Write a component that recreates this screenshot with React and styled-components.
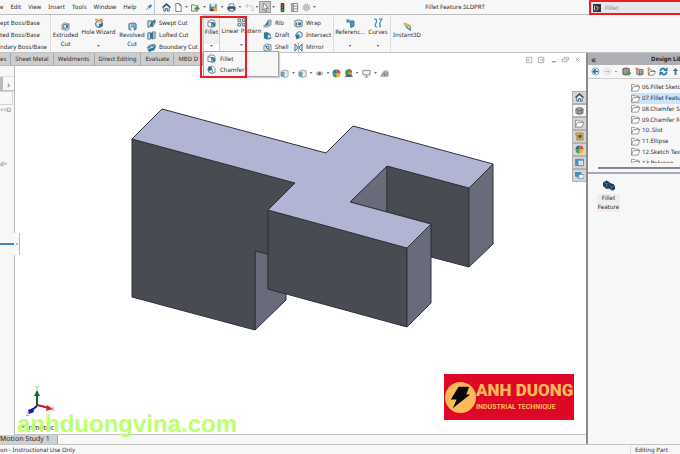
import React from 'react';
import styled, { createGlobalStyle } from 'styled-components';

const GlobalStyle = createGlobalStyle`
  * {
    box-sizing: border-box;
  }
  body {
    margin: 0;
    background: #fff;
    font-family: "Noto Sans", "Open Sans", sans-serif;
    font-size: 6px;
    line-height: 10px;
    color: #2c2c2c;
    text-rendering: geometricPrecision;
  }
  button, input {
    font: inherit;
    color: inherit;
    text-rendering: inherit;
    padding: 0;
    border: 0;
    background: none;
  }
  svg {
    flex: none;
  }
  ul {
    list-style: none;
    margin: 0;
    padding: 0;
  }
`;

const Page = styled.div`
  display: flex;
  flex-direction: column;
  height: 100vh;
  overflow: hidden;
`;

const MenuBar = styled.header`
  display: flex;
  flex: none;
  height: 15px;
  background: #f7f7f7;
  border-bottom: 1px solid #bdbdbd;
`;

const Menus = styled.nav`
  display: flex;
  align-items: center;
  gap: 7px;
  width: 155px;
  border-right: 1px solid #c4c4c4;
  white-space: nowrap;

  button:last-child {
    margin-left: auto;
  }
`;

const TextButton = styled.button`
  white-space: nowrap;
`;

const QuickBar = styled.div`
  display: flex;
  align-items: center;
  padding-left: 5px;
  width: 166px;
`;

const IconButton = styled.button`
  display: flex;
  flex: none;
  align-items: center;
  justify-content: center;
  width: ${(p) => p.$width || 12}px;
  height: 12px;
  background: ${(p) => (p.$pressed ? '#c9c9c9' : 'none')};
  border: ${(p) => (p.$pressed ? '1px solid #9a9a9a' : '0')};
`;

const Arrow = styled.span`
  display: block;
  width: 3px;
  height: 2px;
  background: #777;
  clip-path: polygon(0 0, 100% 0, 50% 100%);
`;

const FileName = styled.div`
  flex: 1;
  text-align: center;
  line-height: 15px;
`;

const SearchBox = styled.label`
  display: flex;
  align-items: center;
  gap: 4px;
  width: 91px;
  height: 15px;
  padding-left: 2px;
  border: 2px solid #ec1c24;
  border-right: 0;
  background: #e8e8ec;

  input {
    flex: 1;
    min-width: 0;
    color: #888;
    outline: 0;
  }
`;

const Ribbon = styled.div`
  display: flex;
  flex: none;
  height: 38px;
  background: #f7f7f7;
  border-bottom: 1px solid #c2c2c2;
  white-space: nowrap;
`;

const Group = styled.div`
  display: flex;
  height: 37px;
  border-right: 1px solid #dcdcdc;
`;

const Stack = styled.div`
  display: grid;
  grid-template-rows: repeat(3, 12px);
  width: ${(p) => p.$width}px;
  padding-top: 2px;
`;

const SmallTool = styled.button`
  display: flex;
  align-items: center;
  gap: 3px;
  line-height: 12px;
`;

const BigTool = styled.button`
  display: flex;
  flex-direction: column;
  align-items: center;
  width: ${(p) => p.$width}px;
  height: 37px;
  padding-top: ${(p) => p.$top || 3}px;
  line-height: 9px;
  background: ${(p) => (p.$open ? 'linear-gradient(#f0f0f0 28px, #fff 28px)' : 'none')};
  border: ${(p) => (p.$open ? '1px solid #cfcfcf' : '0')};

  ${Arrow} {
    margin-top: 8px;
  }
`;

const MenuAnchor = styled.div`
  position: relative;
`;

const DropMenu = styled.div`
  position: absolute;
  z-index: 2;
  top: 36px;
  left: 0;
  width: 76px;
  padding: 1px 3px;
  background: #f7f7f7;
  border: 1px solid #a8a8a8;
  box-shadow: 1px 1px 1px #ccc;

  button {
    display: flex;
    align-items: center;
    gap: 4px;
    width: 100%;
    height: 11px;
  }
`;

const RedFrame = styled.div`
  position: absolute;
  z-index: 3;
  top: 1px;
  left: -3px;
  width: 47px;
  height: 62px;
  border: 2px solid #ec1c24;
  pointer-events: none;
`;

const Work = styled.div`
  display: flex;
  flex: 1;
  min-height: 0;
`;

const Documents = styled.div`
  display: flex;
  flex: 1;
  flex-direction: column;
  min-width: 0;
`;

const TabRow = styled.div`
  display: flex;
  flex: none;
  height: 13px;
`;

const Tab = styled.button`
  height: 13px;
  padding: 0 4px;
  background: #cdcdcd;
  border-right: 1px solid #a9a9a9;
  border-bottom: 1px solid #b5b5b5;
  white-space: nowrap;

  &:first-child {
    padding-left: 0;
  }
`;

const WindowButtons = styled.div`
  display: flex;
  margin-left: auto;
  padding-right: 3px;
`;

const Body = styled.div`
  display: flex;
  flex: 1;
  min-height: 0;
`;

const FeaturePanel = styled.aside`
  display: flex;
  flex: none;
  flex-direction: column;
  width: 15px;
  background: #f7f7f7;
  border-right: 1px solid #b9b9b9;
  color: #777;
`;

const PanelTabs = styled.div`
  display: flex;
  height: 15px;
  margin-top: 10px;
  border-top: 1px solid #ddd;
  border-bottom: 1px solid #bbb;

  &::before {
    content: '';
    width: 3px;
    background: #bbb;
  }
  button {
    flex: 1;
    font-size: 10px;
  }
`;

const FilterBox = styled.div`
  height: 14px;
  width: 13px;
  border: 1px solid #d5d5d5;
  border-left: 0;
`;

const TreeText = styled.div`
  height: 54px;
  overflow: hidden;
`;

const RollbackBar = styled.div`
  position: relative;
  z-index: 1;
  display: flex;
  align-items: center;
  width: 20px;
  height: 22px;
  margin-top: 20px;
  background: linear-gradient(90deg, #f7f7f7 14px, #fafafa 14px);
  border: solid #b9b9b9;
  border-width: 0 1px 0 0;

  &::before {
    content: '';
    width: 14px;
    height: 2px;
    background: #3b87c8;
  }
  &::after {
    content: '';
    width: 2px;
    height: 2px;
    margin-left: 2px;
    background: #bbb;
  }
`;

const Viewport = styled.main`
  position: relative;
  display: flex;
  flex: 1;
  flex-direction: column;
  min-width: 0;
  background: #fff;
  border-bottom: 1px solid #c4c4c4;
`;

const ViewTools = styled.div`
  display: flex;
  flex: none;
  align-items: center;
  justify-content: center;
  height: 14px;
  padding-left: 83px;
`;

const Scene = styled.svg`
  display: block;
  flex: 1;
  width: 100%;
  min-height: 0;
`;

const ViewName = styled.div`
  position: absolute;
  left: 6px;
  bottom: 0;
  font-size: 7px;
  color: #222;
`;

const Watermark = styled.div`
  position: absolute;
  left: 2px;
  bottom: -3px;
  font: bold 24px/24px "Liberation Sans", sans-serif;
  color: #bdff6e;
`;

const Brand = styled.div`
  position: absolute;
  right: -2px;
  bottom: 14px;
  display: flex;
  align-items: center;
  width: 130px;
  height: 46px;
  padding-left: 1px;
  background: #de0725;
  color: #ffb957;
  font-family: Roboto, "Liberation Sans", sans-serif;
  white-space: nowrap;
`;

const BrandName = styled.div`
  font-size: 17px;
  line-height: 19px;
  font-weight: 900;
`;

const BrandLine = styled.div`
  font-size: 7px;
  line-height: 12px;
  font-weight: 700;
`;

const SideTabs = styled.div`
  flex: none;
  width: 14px;
  padding-top: 25px;
  border-bottom: 1px solid #c4c4c4;
`;

const SideTab = styled.button`
  display: flex;
  align-items: center;
  justify-content: center;
  width: 14px;
  height: 13px;
  background: ${(p) => (p.$active ? '#f7f7f7' : '#d5d5d5')};
  border: 1px solid #b2b2b2;
  border-right: 0;
`;

const MotionRow = styled.div`
  display: flex;
  flex: none;
  height: 9px;
  background: #f7f7f7;
`;

const MotionTab = styled.button`
  width: 58px;
  text-align: left;
  font-size: 7px;
  line-height: 9px;
  background: #d0d0d0;
  border-right: 1px solid #aaa;
`;

const Pane = styled.aside`
  display: flex;
  flex: none;
  flex-direction: column;
  width: 94px;
  background: #f7f7f7;
  border-left: 2px solid #8a8a8a;
  overflow: hidden;
`;

const PaneHead = styled.div`
  display: flex;
  flex: none;
  height: 12px;
  padding-left: 3px;
  background: #aeb0b3;
  color: #222;
  line-height: 11px;
  white-space: nowrap;

  button {
    flex: none;
    width: 60px;
    text-align: left;
    font-size: 10px;
  }
  h2 {
    margin: 0;
    font-size: 6px;
    line-height: 12px;
  }
`;

const PaneTools = styled.div`
  display: flex;
  flex: none;
  align-items: center;
  height: 14px;
  padding-left: 1px;
  border-bottom: 1px solid #d0d0d0;
`;

const Folders = styled.div`
  flex: none;
  height: 84px;
  padding: 3px 0 0 43px;
  overflow: hidden;

  ul {
    display: grid;
    grid-template-rows: repeat(8, 1fr);
    height: 86px;
  }
`;

const Folder = styled.li`
  display: flex;
  align-items: center;
  gap: 2px;
  background: ${(p) => (p.$selected ? '#c9e5fb' : 'none')};
  white-space: nowrap;
`;

const PaneScroll = styled.div`
  flex: none;
  height: 2px;
  margin: 4px 0 3px 10px;
  background: #868686;
`;

const Splitter = styled.div`
  flex: none;
  height: 2px;
  background: #a3a8c3;
`;

const Part = styled.figure`
  display: flex;
  flex-direction: column;
  align-items: center;
  align-self: flex-start;
  width: 23px;
  margin: 6px 0 0 9px;

  figcaption {
    margin-top: 2px;
    background: #eee;
    line-height: 9px;
    text-align: center;
  }
`;

const StatusBar = styled.footer`
  display: flex;
  flex: none;
  justify-content: space-between;
  height: 10px;
  line-height: 11px;
  background: #f7f7f7;
  border-top: 1px solid #c4c4c4;
`;

const StatusCell = styled.span`
  width: 50px;
  padding-left: 4px;
  border-left: 1px solid #ddd;
`;

const BLUE = '#32789c';
const GREY = '#8b9297';

// all glyphs are drawn on a 10 x 10 grid
const glyphs = {
  pin: <path d="M1.500 8.500 4 6M3 4l3 3M4.500 4.500l2.500-2.500 1.500 1.500L6 6z" stroke="#2b86bd" fill="#2b86bd" />,
  home: <><path d="M2 5v4h2V6h2v3h2V5L5 2z" fill="#fff" stroke="#38617d" /><path d="M.5 5 5 1l4.500 4" fill="none" stroke="#275775" strokeWidth="1.500" /></>,
  page: <path d="M2 .5h4l2 2v7H2zM6 .5v2h2" fill="#fff" stroke="#777" />,
  open: <><path d="M.5 9V2h3l1 1h3v6z" fill="#eee" stroke="#777" /><path d="M4 8V5h2V3l4 3-4 3V7z" fill="#3d9b35" /></>,
  save: <><path d="M.5 1h8v8h-8z" fill="#527a9b" /><path d="M2 1h5v3H2z" fill="#e7ebee" /><path d="M4 5h5v4H4z" fill="#e2a64e" /><path d="M2 7h3v2H2z" fill="#283e50" /></>,
  print: <><path d="M2.500 1h5v3h-5z" fill="#fff" stroke="#777" /><path d="M.5 4h9v4h-9z" fill="#2d5874" /><path d="M2.500 6h5v3h-5z" fill="#d8e4ec" stroke="#39647f" /></>,
  undo: <path d="M3 1 1 3l2 2M1 3h5q3 0 3 3v2H6" fill="none" stroke="#ccc" strokeWidth="1.200" />,
  cursor: <path d="m3 0 5 6-3 0 1.500 3-1.500.5L4 6.500 2 8z" fill="#fff" stroke="#555" strokeWidth=".7" />,
  light: <><rect x="3" y="0" width="4" height="10" rx="1" fill="#383838" /><circle cx="5" cy="2" r="1.300" fill="#e53020" /><circle cx="5" cy="5" r="1" fill="#98721e" /><circle cx="5" cy="8" r="1.300" fill="#38ab48" /></>,
  list: <><path d="M1.500.5h7v9h-7zM4 1v8M4 3.500h4M4 6.500h4" fill="#fff" stroke="#737c82" /><path d="M1.500 1H4v8H1.500z" fill="#9ba9b0" /></>,
  gear: <><circle cx="5" cy="5" r="3.800" fill="none" stroke="#999" strokeDasharray="1.500 .8" /><circle cx="5" cy="5" r="2.500" fill="none" stroke="#999" /><circle cx="5" cy="5" r="1" fill="#888" /></>,
  find: <><path d="M0 0h10v10H0z" fill="#333" /><path d="M2 2v6M4 3l3 2-3 3" fill="none" stroke="#ddd" strokeWidth="1.200" /></>,
  extrude: <><path d="m1 3 3-2 5 1v6L6 9.500 1 8z" fill="#cfd3d5" stroke={GREY} /><path d="M3 3h3v4H3z" fill="#fff" stroke={BLUE} /><path d="M6 3.500 8 2v4L6 7z" fill={BLUE} /></>,
  hole: <><circle cx="5" cy="6" r="3.500" fill="#dde2e5" stroke="#506a78" /><path d="M5 6 9 5v3L5 9.500z" fill={BLUE} /><path d="M1 1.500h3M4 3l3-2 2 2" fill="none" stroke="#e39a2c" strokeWidth="1.500" /></>,
  revolve: <><path d="m1 2 4-1 4 1v6L7 9V6L5 5 3 6v3L1 8z" fill="#87adc1" stroke={BLUE} /><path d="M3 2v6" stroke="#eee" /></>,
  sweep: <><path d="M1 9V2h4v3L3 9zM6 9l3-5V1L6 3z" fill="#cdd2d5" stroke="#537283" /><path d="M3 8q1-5 5-7l1 2Q6 5 5 9z" fill={BLUE} /></>,
  loft: <><path d="M1 2h3v7H1zM6 1h3v7L6 9z" fill="#d5d9db" stroke="#537283" /><path d="M3 2h4v6L4 9z" fill={BLUE} /></>,
  boundary: <><path d="m0 5 3-3 6-1 1 3-2 4-6 2z" fill={BLUE} /><path d="m1 6 5-1 3-3M3 3l4 2" stroke="#d6e7f0" fill="none" /></>,
  fillet: <><path d="m1 3 3-2 4 .5L9 4v4L6 9.500 1 8z" fill="#fafafa" stroke="#758087" /><path d="M4 3q4 0 5 2v3L6 9V6z" fill={BLUE} /><path d="m1 3 4 1v5" fill="none" stroke="#758087" /></>,
  chamfer: <><path d="m2 2 4-1 3 3v4L6 9.500 2 8 1 5z" fill="#fafafa" stroke="#758087" /><path d="M2 2h3l1 3-4 2-1-2z" fill="#266d94" /><path d="M6 5v4" stroke="#758087" /></>,
  pattern: <path d="M1 1h3v3H1zM6 1h3v3H6zM1 6h3v3H1zM6 6h3v3H6zM4 4l2 2" fill="#d3dadd" stroke="#557e93" />,
  rib: <><path d="M6 1h3v6L5 9H1V7h3z" fill="#b5bdc2" stroke="#7b878e" strokeWidth=".7" /><path d="M6 1v6H2z" fill={BLUE} /></>,
  draft: <><path d="m1 2 3-1 4 2 1 6-5 .5L1 8z" fill={BLUE} /><path d="M5 4h3l1 4H5zM1 2l4 2" fill="#d7dcdf" stroke="#567482" strokeWidth=".7" /></>,
  shell: <><path d="M1 3 4 1l5 1v6L6 9 1 8z" fill="#e4e7e9" stroke="#7e898f" /><path d="M2 3h5v5L4 6z" fill="#28749c" /><path d="M4 4h2v3z" fill="#fff" /></>,
  wrap: <><path d="M1 2q4-2 8 0v6q-4 2-8 0z" fill="#e0e4e6" stroke="#657983" /><path d="M2 4h6v3H2z" fill={BLUE} /><path d="M4 4v3" stroke="#fff" /></>,
  intersect: <><circle cx="6" cy="4" r="3.300" fill="#dce8ef" stroke={BLUE} /><path d="M1 4h5v4l-3 1.500z" fill={BLUE} /></>,
  mirror: <><path d="M1 1l3 3v2L1 9zM9 1 6 4v2l3 3z" fill="#c2d7e2" stroke={BLUE} /><path d="M5 0v10" stroke="#888" strokeWidth=".7" /></>,
  reference: <><path d="M5 3h4v5L6 9.500z" fill="#4b9bc4" stroke={BLUE} /><path d="M3 1v4M1 3h4M1.500 1.500l3 3M4.500 1.500l-3 3" stroke={BLUE} strokeWidth=".8" /></>,
  curves: <path d="M1 1q4 0 2 4t1 4M6 1h3Q6 5 7 7q1 2-1 2" fill="none" stroke="#3a86ac" strokeWidth="1.200" />,
  instant: <><path d="m1 1 6 2 2 3-3-1-4-1z" fill="#edc12f" stroke="#a78423" strokeWidth=".6" /><path d="m3 5 5 4V6" stroke="#4389ae" fill="none" strokeWidth="1.400" /></>,
  cube: <><path d="m1 3 3-2 5 1v6L6 9.500 1 8z" fill="#e4eaee" stroke="#839099" strokeWidth=".8" /><path d="M1 3h4v6L1 8z" fill="#6f9fb8" /></>,
  eye: <><path d="M1 5q4-4 8 0-4 4-8 0z" fill="#ddd" stroke="#888" strokeWidth=".8" /><circle cx="5" cy="5" r="1.700" fill="#666" /></>,
  ball: <><circle cx="5" cy="5" r="4.500" fill="#e9e9e9" /><path d="M5 5V.5A4.500 4.500 0 0 1 9.500 5z" fill="#e7482a" /><path d="M5 5h4.500A4.500 4.500 0 0 1 5 9.500z" fill="#e9b62c" /><path d="M5 5v4.500A4.500 4.500 0 0 1 .5 5z" fill="#3ba94b" /><path d="M5 5H.5A4.500 4.500 0 0 1 5 .5z" fill="#2e6da4" /></>,
  scene: <><circle cx="5" cy="4" r="3.800" fill="#3ba05a" /><path d="M5 4V0a4 4 0 0 1 4 4z" fill="#de4e34" /><path d="M5 4h4L6 8z" fill="#e9b62c" /><path d="M1 9 3 6h5l2 3z" fill="#55636b" /></>,
  screen: <path d="M1 1.500h8v5H1zM5 7v2M3 9h4" fill="#eee" stroke="#858585" />,
  sketch: <><path d="M0 9 3 3q3-3 6-1v7z" fill="#bbb" /><path d="m1 8 4-5v5l4-5v5M2 6h6" fill="none" stroke="#808080" strokeWidth=".8" /></>,
  winLeft: <path d="M1.500 2.500h6v6h-6zM3.500 4v3M3 5.500h2" fill="#fff" stroke="#aaa" />,
  winRight: <path d="M1.500 2.500h6v6h-6zM6 4v3M3 5.500h2" fill="#fff" stroke="#aaa" />,
  minimise: <path d="M3 7.500h5" stroke="#999" strokeWidth="1.500" />,
  restore: <path d="M1.500 4.500h5v3h-5zM3.500 4V2.500h5v3H7" fill="none" stroke="#aaa" />,
  close: <path d="m3 3 4 4M7 3 3 7" stroke="#999" />,
  parts: <><path d="M1 3q4-3 8 0v5q-4 3-8 0z" fill="#aaa" stroke="#777" /><path d="M1 4q4 2 8 0M4 5v4M7 4v5" fill="none" stroke="#666" /></>,
  folder: <path d="M.5 9V1.500H4l1 1h3.500V4M.5 9l2-5h7.300l-2 5z" fill="#fff" stroke="#777" strokeWidth=".8" />,
  explorer: <><path d="M1 1h8v3H1zM2 5h7v4H2z" fill="#e2b64a" stroke="#8f7a3c" strokeWidth=".8" /><path d="M4 3h3v4H4z" fill="#555" /></>,
  table: <><path d="M.5 1.500h9v7h-9z" fill="#fff" stroke="#4b7f9c" /><path d="M1 1h8v2H1zM1 3h3v5H1z" fill="#4b91b8" /><path d="M5 4.500h3M5 6.500h3" stroke="#aaa" /></>,
  chat: <><path d="M0 1h7v5H4L2 8V6H0z" fill="#4c8fb5" /><path d="M4 4h6v4H8l-1 1-1-1H4z" fill="#fff" stroke="#477f9b" strokeWidth=".8" /></>,
  back: <><circle cx="5" cy="5" r="4" fill="#eaf4fa" stroke="#7fa3b6" /><path d="M8 5H3M5 2.500 2.500 5 5 7.500" stroke="#1d719c" fill="none" strokeWidth="1.500" /></>,
  forward: <><circle cx="5" cy="5" r="4" fill="#f5f5f5" stroke="#ddd" /><path d="M2 5h5M5 3l2 2-2 2" stroke="#bbb" fill="none" /></>,
  add: <><path d="M1 2q3-2 7 0v6q-4 2-7 0z" fill="#999" stroke="#555" /><path d="M5 7h5M7.500 4.500v5" stroke="#43a33a" strokeWidth="1.800" /></>,
  addFile: <><path d="M2 3q3-1 7 0v5q-4 2-7 0z" fill="#bbb" stroke="#666" /><path d="M5 4v5M7 4v5" stroke="#666" /><path d="M0 2h4M2 0v4" stroke="#e68d25" /></>,
  addFolder: <><path d="M1.500 9V3H4l1 1h3v1M1.500 9l2-4h6l-2 4z" fill="#fff" stroke="#666" strokeWidth=".8" /><path d="M0 2h4M2 0v4" stroke="#e68d25" /></>,
  refresh: <><path d="M1.500 5q0-3.500 3.500-3.500L7 3M8.500 5q0 3.500-3.500 3.500L3 7" fill="none" stroke="#2f7ca7" strokeWidth="1.800" /><path d="M9.500 0v4.500H5zM.5 10V5.500H5z" fill="#2f7ca7" /></>,
  up: <path d="M5 1 2 4.500h2V9h2V4.500h2z" fill="#287fad" />,
  block: <><path d="m0 2 3-1.500 2 1 1 1 3 1 1 2v2L8 9 5 7 3 7.500 0 5z" fill="#1f3d57" /><path d="m0 2 3 1 2-1M3 3v3M5 4l2 2 3-1M7 6v2" stroke="#547995" fill="none" strokeWidth=".7" /></>,
};

const Icon = ({ name, size = 9 }) => (
  <svg width={size} height={size} viewBox="0 0 10 10" aria-hidden="true">
    {glyphs[name]}
  </svg>
);

const quickTools = [
  ['home', 12], ['page', 12], [null, 5], ['open', 13], [null, 5], ['save', 12], [null, 6],
  ['print', 12], [null, 6], ['undo', 12], [null, 4],
];
const moreTools = [['light', 12], ['list', 12], ['gear', 12], [null, 5]];
const viewTools = [
  ['cube', 12], [null, 6], ['cube', 12], [null, 5], ['eye', 12], [null, 5],
  ['ball', 12], ['scene', 12], [null, 5], ['screen', 14], [null, 4], ['sketch', 14],
];
const folders = [
  '06.Fillet Sketch', '07.Fillet Feature', '08.Chamfer Sketch', '09.Chamfer Feature',
  '10..Slot', '11.Ellipse', '12.Sketch Text', '13.Polygon',
];
const sideTabs = ['home', 'parts', 'folder', 'explorer', 'ball', 'table', 'chat'];

const Tools = ({ items }) =>
  items.map(([name, width], i) => (
    <IconButton key={i} $width={width} aria-label={name || 'More'}>
      {name ? <Icon name={name} /> : <Arrow />}
    </IconButton>
  ));

const ToolStack = ({ items, width }) => (
  <Stack $width={width}>
    {items.map(([icon, label]) => (
      <SmallTool key={label}>
        {icon && <Icon name={icon} />}
        {label}
      </SmallTool>
    ))}
  </Stack>
);

const Model = () => (
  <Scene viewBox="15 80 557 354" role="img" aria-label="Part model">
    <g stroke="#30323a" strokeWidth="1" strokeLinejoin="round">
      <path d="M387 166 350 202l37 10z" fill="#686b7a" />
      <path d="m387 166 82 22v79l-38-10v-33l-44-12z" fill="#494b53" />
      <path d="m469 188 24-24v80l-24 23z" fill="#686b7a" />
      <path d="m255 251 13 3v35l18 5v6l-31 30z" fill="#686b7a" />
      <path d="m132 139 163 44-27 27v44l-13-3v79l-123-33z" fill="#494b53" />
      <path d="m268 210 139 38v79l-139-38z" fill="#494b53" />
      <path d="m407 248 24-24v79l-24 24z" fill="#686b7a" />
      <path d="m162 109 164 44 27-27 140 38-24 24-82-22-37 36 81 22-24 24-139-38 27-27-163-44z" fill="#b1b5d3" />
    </g>
    <path d="M37 406v-12" stroke="#17652b" strokeWidth="2" />
    <path d="m34 396 3-6 3 6z" fill="#17652b" />
    <path d="m37 405 12 3" stroke="#b51a1d" strokeWidth="2" />
    <path d="m47 405 6 4-7 2z" fill="#d4262a" />
    <path d="m37 406-5 4" stroke="#1a1aa5" strokeWidth="2" />
    <path d="m33 408 1 4-5 2-1-4z" fill="#1a1aa5" />
    <g fontFamily="Liberation Sans" fontSize="6">
      <text x="35" y="390" fill="#57b765">Y</text>
      <text x="51" y="411" fill="#f06a6a">X</text>
      <text x="26" y="416" fill="#6a6af0">Z</text>
    </g>
  </Scene>
);

const RibbonBar = () => (
  <Ribbon>
    <Group>
      <ToolStack width={50} items={[[null, 'ept Boss/Base'], [null, 'ted Boss/Base'], [null, 'ndary Boss/Base']]} />
    </Group>
    <Group>
      <BigTool $width={29} $top={7}><Icon name="extrude" />Extruded<br />Cut</BigTool>
      <BigTool $width={37}><Icon name="hole" size={10} />Hole Wizard<Arrow /></BigTool>
      <BigTool $width={30} $top={7}><Icon name="revolve" />Revolved<br />Cut</BigTool>
      <ToolStack width={55} items={[['sweep', 'Swept Cut'], ['loft', 'Lofted Cut'], ['boundary', 'Boundary Cut']]} />
    </Group>
    <Group>
      <MenuAnchor>
        <BigTool $width={17} $open><Icon name="fillet" />Fillet<Arrow /></BigTool>
        <DropMenu>
          <button><Icon name="fillet" />Fillet</button>
          <button><Icon name="chamfer" />Chamfer</button>
        </DropMenu>
        <RedFrame />
      </MenuAnchor>
      <BigTool $width={43}><Icon name="pattern" />Linear Pattern<Arrow /></BigTool>
      <ToolStack width={31} items={[['rib', 'Rib'], ['draft', 'Draft'], ['shell', 'Shell']]} />
      <ToolStack width={39} items={[['wrap', 'Wrap'], ['intersect', 'Intersect'], ['mirror', 'Mirror']]} />
    </Group>
    <Group>
      <BigTool $width={32}><Icon name="reference" size={10} />Referenc...<Arrow /></BigTool>
      <BigTool $width={24}><Icon name="curves" size={10} />Curves<Arrow /></BigTool>
    </Group>
    <BigTool $width={32} $top={7}><Icon name="instant" />Instant3D</BigTool>
  </Ribbon>
);

const DesignLibrary = () => (
  <Pane>
    <PaneHead>
      <button aria-label="Collapse">«</button>
      <h2>Design Library</h2>
    </PaneHead>
    <PaneTools>
      <Tools items={[['back', 12], ['forward', 12], [null, 6], ['add', 14], ['addFile', 12], ['addFolder', 12], ['refresh', 12], ['up', 12]]} />
    </PaneTools>
    <Folders>
      <ul>
        {folders.map((name, i) => (
          <Folder key={name} $selected={i === 1}>
            <Icon name="folder" />
            {name}
          </Folder>
        ))}
      </ul>
    </Folders>
    <PaneScroll />
    <Splitter />
    <Part>
      <Icon name="block" size={12} />
      <figcaption>Fillet Feature</figcaption>
    </Part>
  </Pane>
);

const App = () => (
  <Page>
    <GlobalStyle />
    <MenuBar>
      <Menus>
        {['e', 'Edit', 'View', 'Insert', 'Tools', 'Window', 'Help'].map((name) => (
          <TextButton key={name}>{name}</TextButton>
        ))}
        <IconButton aria-label="Pin menu"><Icon name="pin" size={8} /></IconButton>
      </Menus>
      <QuickBar>
        <Tools items={quickTools} />
        <IconButton $pressed aria-label="Select"><Icon name="cursor" /></IconButton>
        <Tools items={[[null, 5], ...moreTools]} />
      </QuickBar>
      <FileName>Fillet Feature.SLDPRT</FileName>
      <SearchBox>
        <Icon name="find" size={8} />
        <input aria-label="Search commands" defaultValue="Fillet" />
      </SearchBox>
    </MenuBar>
    <RibbonBar />
    <Work>
      <Documents>
        <TabRow>
          {['es', 'Sheet Metal', 'Weldments', 'Direct Editing', 'Evaluate', 'MBD D'].map((name) => (
            <Tab key={name}>{name}</Tab>
          ))}
          <WindowButtons>
            <Tools items={[['winLeft', 12], ['winRight', 12], ['minimise', 12], ['restore', 12], ['close', 12]]} />
          </WindowButtons>
        </TabRow>
        <Body>
          <FeaturePanel>
            <PanelTabs>
              <button aria-label="More tabs">›</button>
            </PanelTabs>
            <FilterBox />
            <TreeText>&lt;&lt;D</TreeText>
            <TreeText>d&gt;</TreeText>
            <RollbackBar />
          </FeaturePanel>
          <Viewport>
            <ViewTools><Tools items={viewTools} /></ViewTools>
            <Model />
            <ViewName>*Trimetric</ViewName>
            <Watermark>anhduongvina.com</Watermark>
            <Brand>
              <svg width="31" height="31" viewBox="0 0 32 32" aria-hidden="true">
                <circle cx="16" cy="16" r="16" fill="#ffb957" />
                <path d="m14 5 11 0-3 8h4L8 27l4-9H6z" fill="#080808" />
              </svg>
              <div>
                <BrandName>ANH DUONG</BrandName>
                <BrandLine>INDUSTRIAL TECHNIQUE</BrandLine>
              </div>
            </Brand>
          </Viewport>
          <SideTabs>
            {sideTabs.map((name, i) => (
              <SideTab key={name} $active={i === 1} aria-label={name}>
                <Icon name={name} />
              </SideTab>
            ))}
          </SideTabs>
        </Body>
        <MotionRow><MotionTab>Motion Study 1</MotionTab></MotionRow>
      </Documents>
      <DesignLibrary />
    </Work>
    <StatusBar>
      <span>on - Instructional Use Only</span>
      <StatusCell>Editing Part</StatusCell>
    </StatusBar>
  </Page>
);

export default App;
